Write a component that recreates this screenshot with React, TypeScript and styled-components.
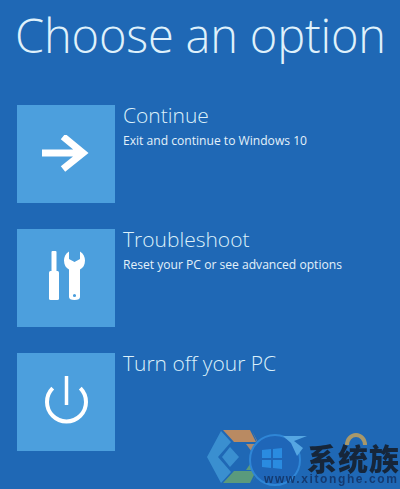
import * as React from 'react';
import styled, { createGlobalStyle } from 'styled-components';

const Global = createGlobalStyle`
  html, body {
    margin: 0;
    padding: 0;
    background: #1f68b5;
  }
`;

const Page = styled.div`
  position: relative;
  width: 400px;
  height: 489px;
  overflow: hidden;
  background: #1f68b5;
  color: #ffffff;
  font-family: 'Open Sans', 'Noto Sans', sans-serif;
`;

const Title = styled.h1`
  margin: 0;
  padding: 4px 0 0 15px;
  height: 105px;
  box-sizing: border-box;
  font-weight: 300;
  font-size: 47px;
  line-height: 62px;
  letter-spacing: -0.2px;
  white-space: nowrap;
  color: #dff1fb;
`;

const List = styled.div`
  display: flex;
  flex-direction: column;
  gap: 26px;
  padding-left: 17px;
`;

const Row = styled.div`
  display: flex;
  gap: 8px;
`;

const Tile = styled.div`
  flex: none;
  width: 98px;
  height: 98px;
  display: flex;
  align-items: center;
  justify-content: center;
  background: #4c9fdd;
`;

const Label = styled.div`
  display: flex;
  flex-direction: column;
`;

const Name = styled.div`
  font-weight: 300;
  font-size: 21px;
  line-height: 26px;
  margin-top: -3px;
  color: #dcf0fa;
`;

const Hint = styled.div`
  font-size: 12.1px;
  line-height: 16px;
  margin-top: 5px;
  color: #e3f1fa;
`;

const Watermark = styled.div`
  position: absolute;
  left: 206px;
  top: 430px;
  width: 194px;
  height: 59px;
  display: grid;
  filter: blur(0.5px);
`;

const Mark = styled.svg`
  grid-area: 1 / 1;
`;

const MarkText = styled.div`
  grid-area: 1 / 1;
  display: flex;
  flex-direction: column;
  padding: 12px 0 0 58px;
`;

const Brand = styled.div`
  padding-left: 43px;
  font-family: 'Noto Sans CJK SC', sans-serif;
  font-weight: 900;
  font-size: 30px;
  line-height: 31px;
  letter-spacing: 1px;
  white-space: nowrap;
  color: #16263a;
`;

const Url = styled.div`
  font-family: 'Liberation Sans', sans-serif;
  font-weight: 700;
  font-size: 12px;
  line-height: 12px;
  letter-spacing: 1.6px;
  white-space: nowrap;
  color: #143a70;
`;

const ArrowIcon = () => (
  <svg width="48" height="38" viewBox="0 0 48 38">
    <path d="M0 18H42M21 1.500L41 18L21 34" fill="none" stroke="#fff" strokeWidth="7" />
  </svg>
);

const ToolsIcon = () => (
  <svg width="38" height="54" viewBox="-2 0 38 54" fill="#fff">
    <rect x="2.500" y="0" width="5" height="22" rx="1" />
    <rect x="0" y="20" width="10" height="29" rx="1.500" />
    <path
      fillRule="evenodd"
      d="M20 0.500V8L25.500 11L31 8V0.500C34.500 2.500 36 6 36 9.500C36 14 34 17 31 18.500V46Q31 49 25.500 49Q20 49 20 46V18.500C17 17 15 14 15 9.500C15 6 16.500 2.500 20 0.500ZM25.500 42.900A1.600 1.600 0 1 0 25.500 46.100A1.600 1.600 0 1 0 25.500 42.900Z"
    />
  </svg>
);

const PowerIcon = () => (
  <svg width="43" height="52" viewBox="0 0 43 52" fill="none" stroke="#fff" strokeWidth="4">
    <path d="M21.500 0V29" strokeWidth="3.500" />
    <path d="M7.700 12.200A19.500 19.500 0 1 0 35.300 12.200" />
  </svg>
);

// watermark drawing: hexagon logo, globe with the window panes, and the shapes behind the brand text
const WatermarkMark = () => (
  <Mark width="194" height="59" viewBox="0 0 194 59">
    <path d="M1 27L15 1L25 12L12 27L25 42L15 53Z" fill="#3a8fd0" />
    <path d="M17 0H44L50 12H28Z" fill="#b98a62" />
    <path d="M46 1L57 22H46L40 14H52Z" fill="#a98a70" />
    <path d="M17 53H44L50 41H28Z" fill="#5a9a7c" />
    <path d="M46 53L57 31H46L40 40H52Z" fill="#5a9a7c" />
    <path d="M16 27L24 17L33 27L24 37Z" fill="#3a8fd0" />
    <circle cx="69" cy="30" r="25" fill="#1f66b8" stroke="#2f86d6" strokeWidth="2" />
    <path d="M56 20L65 19V28H56ZM67 19L76 18V28H67ZM56 30H65V38L56 37ZM67 30H76V39L67 38Z" fill="#2a8be0" />
    <path d="M77 6H101L88 11L97 18L91 26L85 13Z" fill="#55a6e2" />
    <path d="M141 15A9 10 0 0 1 159 15" fill="none" stroke="#a8986a" strokeWidth="4" />
  </Mark>
);

const options = [
  { name: 'Continue', hint: 'Exit and continue to Windows 10', icon: <ArrowIcon /> },
  { name: 'Troubleshoot', hint: 'Reset your PC or see advanced options', icon: <ToolsIcon /> },
  { name: 'Turn off your PC', hint: '', icon: <PowerIcon /> },
];

export default function App() {
  return (
    <Page>
      <Global />
      <Title>Choose an option</Title>
      <List>
        {options.map((option) => (
          <Row key={option.name}>
            <Tile>{option.icon}</Tile>
            <Label>
              <Name>{option.name}</Name>
              {option.hint && <Hint>{option.hint}</Hint>}
            </Label>
          </Row>
        ))}
      </List>
      <Watermark>
        <WatermarkMark />
        <MarkText>
          <Brand>系统族</Brand>
          <Url>www.xitonghe.com</Url>
        </MarkText>
      </Watermark>
    </Page>
  );
}
